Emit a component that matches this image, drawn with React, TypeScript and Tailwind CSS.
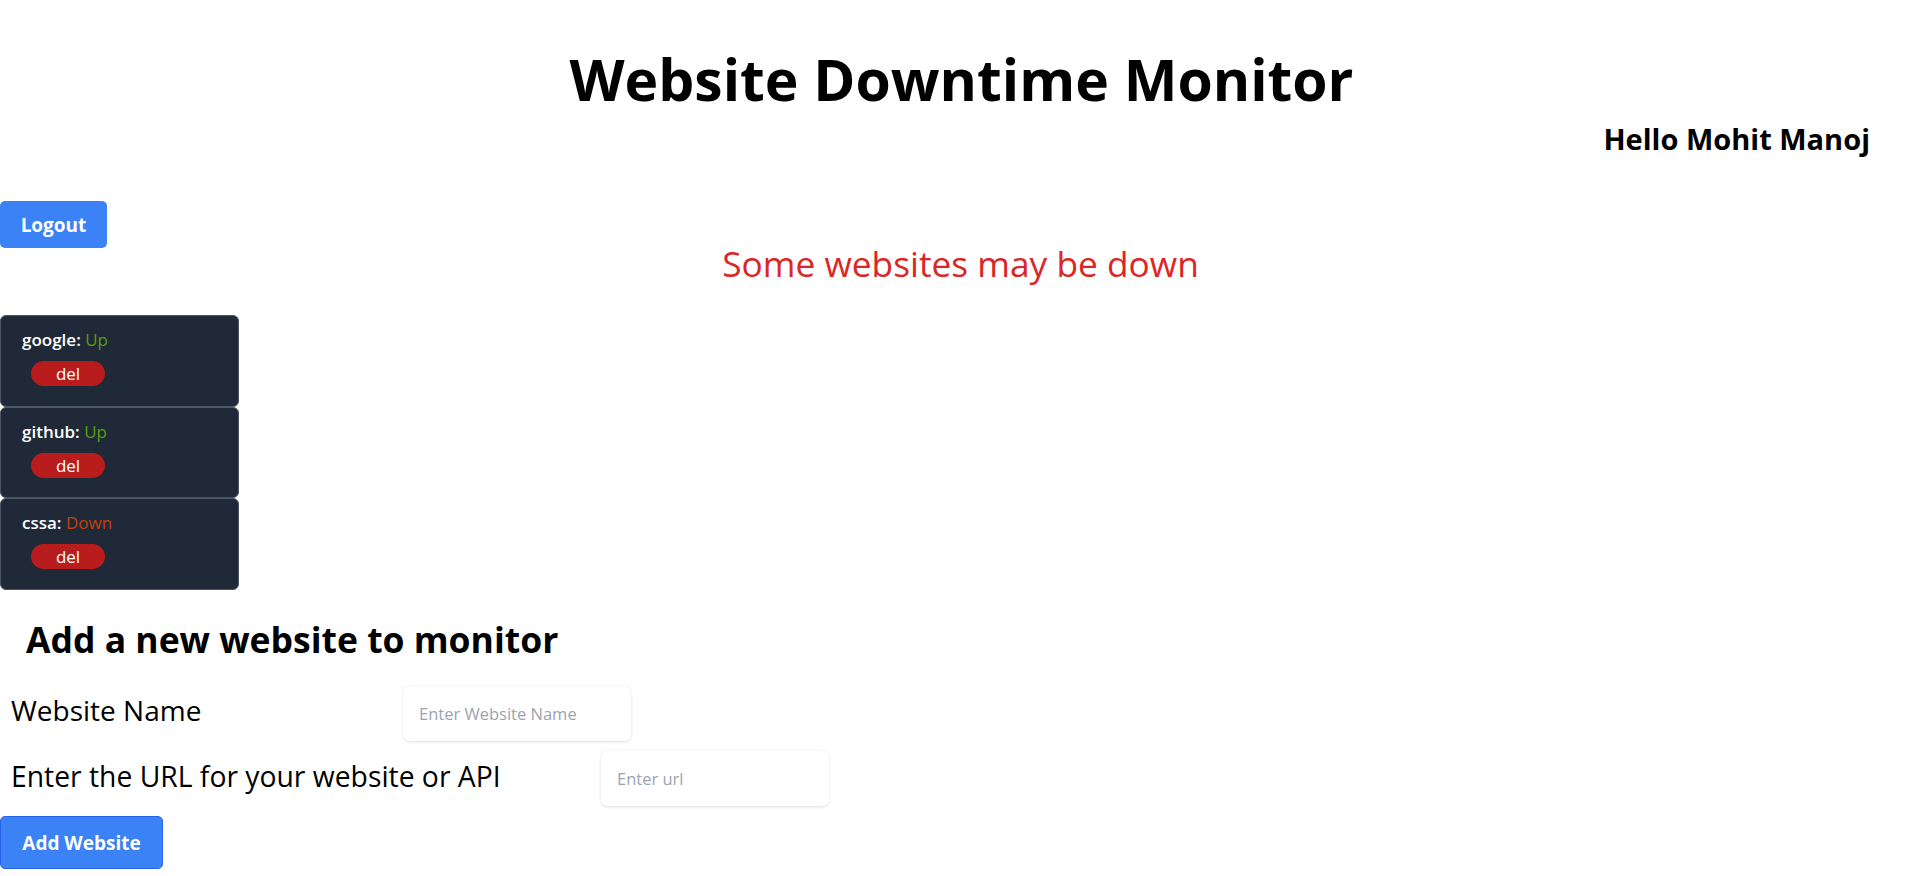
import React from "react";

const sites = [
  { name: "google", status: "Up", h: "h-[92px]" },
  { name: "github", status: "Up", h: "h-[91px]" },
  { name: "cssa", status: "Down", h: "h-[92px]" },
];

export default function App() {
  return (
    <div
      className="w-full min-h-[876px] bg-white text-black"
      style={{ fontFamily: '"Open Sans", "Noto Sans", sans-serif' }}
    >
      <h1 className="pt-[49px] pl-[10px] text-center text-[57px] leading-[60px] font-bold">
        Website Downtime Monitor
      </h1>
      <h2 className="mt-[14px] pr-[43px] text-right text-[29px] leading-[32px] font-bold">
        Hello Mohit Manoj
      </h2>
      <div className="mt-[46px]">
        <button className="w-[107px] h-[47px] pt-[1px] rounded-[5px] bg-[#3b82f6] text-white text-[19px] leading-[27px] font-bold">
          Logout
        </button>
      </div>
      <p className="mt-[1px] pl-[8px] text-center text-[35.3px] leading-[28px] text-[#dc2626]">
        Some websites may be down
      </p>

      <div className="mt-[38px] w-[239px] flex flex-col">
        {sites.map((s) => (
          <div
            key={s.name}
            className={`${s.h} rounded-md border border-[#4b5563] bg-[#1f2937] pt-[12px] pl-[21px]`}
          >
            <div className="text-[17px] leading-[24px] text-white">
              <span className="font-semibold">{s.name}: </span>
              <span className={s.status === "Up" ? "text-[#5a9e0f]" : "text-[#c2410c]"}>
                {s.status}
              </span>
            </div>
            <button className="mt-[9px] ml-[9px] w-[74px] h-[25px] rounded-full bg-[#b91c1c] text-white text-[17px] leading-[25px]">
              del
            </button>
          </div>
        ))}
      </div>

      <h2 className="mt-[27px] pl-[26px] text-[35.5px] leading-[45px] font-bold">
        Add a new website to monitor
      </h2>

      <div className="mt-[24px] flex items-start">
        <label className="w-[403px] shrink-0 pl-[11px] pt-[6px] text-[28px] leading-[36px]">
          Website Name
        </label>
        <input
          type="text"
          placeholder="Enter Website Name"
          className="w-[228px] h-[55px] rounded-md bg-white pl-[16px] text-[16.5px] leading-[22px] shadow-[0_1px_3px_rgba(0,0,0,0.12),0_0_1px_rgba(0,0,0,0.08)] placeholder:text-[#9ca3af] outline-none"
        />
      </div>

      <div className="mt-[10px] flex items-start">
        <label className="w-[601px] shrink-0 pl-[11px] pt-[7px] text-[28.3px] leading-[36px]">
          Enter the URL for your website or API
        </label>
        <input
          type="text"
          placeholder="Enter url"
          className="w-[228px] h-[55px] rounded-md bg-white pl-[16px] text-[16.5px] leading-[22px] shadow-[0_1px_3px_rgba(0,0,0,0.12),0_0_1px_rgba(0,0,0,0.08)] placeholder:text-[#9ca3af] outline-none"
        />
      </div>

      <div className="mt-[10px]">
        <button className="w-[163px] h-[53px] pt-[2px] rounded-[5px] border border-[#2563eb] bg-[#3b82f6] text-white text-[19px] leading-[27px] font-bold">
          Add Website
        </button>
      </div>
    </div>
  );
}
